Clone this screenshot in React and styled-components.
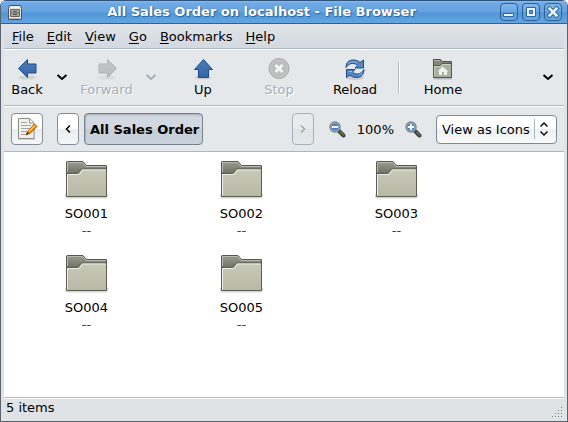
import React from "react";
import styled, { createGlobalStyle } from "styled-components";

const GlobalStyle = createGlobalStyle`
  * { box-sizing: border-box; }
  body { margin: 0; background: #fff; }
  body, button, select { font-family: "DejaVu Sans", sans-serif; font-size: 13px; color: #000; }
  svg { display: block; flex: none; }
`;

const Window = styled.div`
  min-height: 100vh;
  display: flex;
  flex-direction: column;
  border: 1px solid #59636e;
  border-top: 0;
  border-radius: 6px 6px 0 0;
  background: #dfe3e6;
  overflow: hidden;
`;

const TitleBar = styled.header`
  height: 24px;
  display: flex;
  align-items: center;
  gap: 4px;
  padding: 0 5px 0 6px;
  border-top: 1px solid #2f547c;
  border-bottom: 1px solid #33618f;
  background: linear-gradient(#86bbf0 0, #70aae5 2px, #65a2df 11px, #5096d7 12px, #62a5e2 22px);
`;

const Title = styled.h1`
  flex: 1;
  margin: 0;
  font-size: 13px;
  line-height: 20px;
  text-align: center;
  white-space: nowrap;
  color: #fff;
  text-shadow: 1px 1px 1px #2c619c, 0 0 1px #2c619c;
`;

const WindowButton = styled.button`
  width: 18px;
  height: 18px;
  padding: 0;
  display: grid;
  place-items: center;
  border: 1px solid #2d5f94;
  border-radius: 4px;
  background: linear-gradient(#83b8ee, #68a5e1 50%, #5297d8 50%, #67a8e4);
`;

const Frame = styled.div`
  flex: 1;
  display: flex;
  flex-direction: column;
  margin: 0 3px;
`;

const MenuBar = styled.nav`
  height: 26px;
  display: flex;
  align-items: center;
  gap: 1px;
  padding: 0 2px;
  border-bottom: 1px solid #fff;
  box-shadow: inset 0 -1px #adb8c1;
  background: linear-gradient(#e1e5e9, #d2d8df);
`;

const MenuItem = styled.button`
  height: 24px;
  padding: 0 6px;
  border: 0;
  background: none;
  line-height: 24px;
  u { text-underline-offset: 2px; text-decoration-thickness: 1px; }
`;

const ToolBar = styled.div`
  height: 57px;
  display: flex;
  align-items: stretch;
  border-bottom: 1px solid #fff;
  box-shadow: inset 0 -1px #adb8c1;
  background: #e4e8eb;
`;

const ToolButton = styled.button`
  width: ${(p) => p.$width || 76}px;
  padding: 8px 0 0;
  display: flex;
  flex-direction: column;
  align-items: center;
  justify-content: flex-start;
  border: 0;
  background: none;
  line-height: 16px;
  white-space: nowrap;
  &:disabled { color: #a3afba; text-shadow: 1px 1px #fff; }
`;

const ArrowButton = styled.button`
  width: 24px;
  padding: 0 0 2px;
  display: grid;
  place-items: center;
  border: 0;
  background: none;
  color: #000;
  &:disabled { color: #a3afba; }
`;

const OverflowButton = styled(ArrowButton)`
  margin-left: auto;
  margin-right: 4px;
`;

const Spacer = styled.div`
  width: 2px;
`;

const Separator = styled.div`
  width: 2px;
  margin: 11px 5px 13px;
  background: linear-gradient(90deg, #afb9c2 50%, #fff 50%);
`;

const LocationBar = styled.div`
  height: 45px;
  display: flex;
  align-items: center;
  padding: 0 7px;
  border-bottom: 1px solid #adb8c1;
  background: #e4e8eb;
`;

const LocationButton = styled.button`
  width: ${(p) => p.$width}px;
  height: 32px;
  padding: 0;
  display: grid;
  place-items: center;
  border: 1px solid #858e98;
  border-radius: 4px;
  background: linear-gradient(#fff 50%, #e9edef 50%, #f5f7f7);
  &:disabled {
    color: #9ea7ae;
    border-color: #a5b0bb;
    background: linear-gradient(#e8ebed 50%, #dee3e6 50%, #e4e8ea);
  }
`;

const PathBar = styled.div`
  flex: 1;
  display: flex;
  align-items: center;
  gap: 5px;
  margin: 0 15px 0 14px;
`;

const CurrentFolder = styled.button`
  height: 32px;
  padding: 0 3px 0 5px;
  margin-right: auto;
  border: 1px solid #77828f;
  border-radius: 4px;
  background: linear-gradient(#c3cad2 0, #d3d9e0 4px, #d0d7df 50%, #c5cdd6 50%, #cbd3dc);
  box-shadow: inset 1px 1px 1px #a9b3be;
  font-weight: bold;
  white-space: nowrap;
`;

const Zoom = styled.div`
  display: flex;
  align-items: center;
  gap: 11px;
  margin-right: 14px;
`;

const ZoomButton = styled.button`
  padding: 0;
  border: 0;
  background: none;
`;

const ViewPicker = styled.label`
  display: grid;
  align-items: center;
  width: 121px;
  > * { grid-area: 1 / 1; }
  > svg { justify-self: end; pointer-events: none; }
`;

const ViewSelect = styled.select`
  width: 100%;
  height: 29px;
  padding: 0 0 0 5px;
  appearance: none;
  border: 1px solid #7f8996;
  border-radius: 4px;
  background: linear-gradient(#fff 50%, #edf0f2 50%, #f8f9f9);
`;

const Files = styled.main`
  flex: 1;
  display: grid;
  grid-template-columns: repeat(auto-fill, 155px);
  grid-auto-rows: 94px;
  padding: 7px 0 0 5px;
  background: #fff;
`;

const FileItem = styled.div`
  display: flex;
  flex-direction: column;
  align-items: center;
`;

const FileName = styled.span`
  margin-top: 4px;
  line-height: 17px;
`;

const FileInfo = styled.span`
  line-height: 17px;
  color: #39395f;
`;

const StatusBar = styled.footer`
  height: 24px;
  display: flex;
  align-items: center;
  justify-content: space-between;
  padding: 0 1px 3px 2px;
  border-top: 1px solid #adb8c1;
  box-shadow: inset 0 1px #fff;
  background: #dfe3e6;
  line-height: 18px;
  > svg { align-self: flex-end; }
`;

const CabinetIcon = () => (
  <svg width="16" height="17" viewBox="0 0 16 17" aria-hidden="true">
    <path d="M2.500 1.500h11l1 3v11h-13v-11z" fill="#e5e5df" stroke="#4a5256" />
    <path d="M3 3h10" stroke="#fafaf7" />
    <path d="M3.500 5.500h9v7h-9zM3.500 9h9" fill="#aaaba2" stroke="#666860" />
    <path d="M6 7.500h4M6 10.500h4" stroke="#4c504b" />
    <path d="M3 14.500h10" stroke="#b9b9b1" />
  </svg>
);

const glyphs = {
  Minimize: (
    <>
      <path d="M2.500 9.500h10v3h-10z" fill="#e9f3fd" stroke="#30659d" />
    </>
  ),
  Maximize: (
    <>
      <path d="M3.500 3.500h9v9h-9z" fill="#e9f3fd" stroke="#30659d" />
      <path d="M6.500 6.500h3v3h-3z" fill="#62a2df" stroke="#30659d" />
    </>
  ),
  Close: (
    <>
      <path d="M4.500 4.500l7 7M11.500 4.500l-7 7" stroke="#30659d" strokeWidth="4.500" strokeLinecap="square" />
      <path d="M4.500 4.500l7 7M11.500 4.500l-7 7" stroke="#e9f3fd" strokeWidth="2.500" strokeLinecap="square" />
    </>
  ),
};

const Chevron = () => (
  <svg width="12" height="8" viewBox="0 0 12 8" aria-hidden="true">
    <path d="M1.500 2L6 6l4.500-4" fill="none" stroke="currentColor" strokeWidth="2" />
  </svg>
);

const SmallArrow = ({ right }) => (
  <svg width="6" height="10" viewBox="0 0 6 10" aria-hidden="true">
    <path d={right ? "M1 1.500L4.500 5 1 8.500" : "M5 1.500L1.500 5 5 8.500"} fill="none" stroke="currentColor" strokeWidth="1.500" />
  </svg>
);

const ArrowIcon = ({ direction }) => {
  const muted = direction === "right";
  const paths = {
    left: "M2.500 10.500L11.500 1.500V6h8.500v9h-8.500v4.500z",
    right: "M20.500 10.500L11.500 1.500V6H3v9h8.500v4.500z",
    up: "M11.500 1.500L20.500 11.500H16.500v8H6.500v-8H2.500z",
  };
  return (
    <svg width="22" height="24" viewBox="0 0 22 24" aria-hidden="true">
      <defs>
        <linearGradient id={"arrow-" + direction} x2="0" y2="1">
          <stop stopColor={muted ? "#c7cbcc" : "#4d7cb8"} />
          <stop offset="1" stopColor={muted ? "#b5b9bb" : "#3465a4"} />
        </linearGradient>
      </defs>
      <ellipse cx="11" cy="19.500" rx="8.500" ry="2" fill="#777" opacity={muted ? 0.1 : 0.2} />
      <path d={paths[direction]} fill={"url(#arrow-" + direction + ")"} stroke={muted ? "#afb4b6" : "#204a87"} strokeLinejoin="round" />
    </svg>
  );
};

const StopIcon = () => (
  <svg width="22" height="24" viewBox="0 0 22 24" aria-hidden="true">
    <circle cx="11" cy="10.500" r="10" fill="#bebdbd" stroke="#aaa9a9" />
    <circle cx="11" cy="10.500" r="8.500" fill="none" stroke="#cac9c9" />
    <path d="M7.500 7l7 7M14.500 7l-7 7" stroke="#f4f5f5" strokeWidth="3" />
  </svg>
);

const ReloadIcon = () => (
  <svg width="22" height="24" viewBox="0 0 22 24" aria-hidden="true">
    <ellipse cx="11" cy="19.500" rx="9" ry="2.500" fill="#777" opacity=".25" />
    <g fill="#5688c3" stroke="#204a87" strokeLinejoin="round">
      <path d="M2 9.500C2 4.500 5 2 9.500 2c3 0 5 1 6.500 2.500L19.500 2v8H11l2.500-2.500C12 6 10.500 5.500 8.500 5.500 5.500 5.500 4 7 2 9.500z" />
      <path d="M20 11.500c0 5-3 8-7.500 8-3 0-5-1-6.500-2.500L2.500 19.500v-8H11L8.500 14c1.500 1.500 3 2 5 2 3 0 4.500-2 6.500-4.500z" />
    </g>
    <path d="M4 6c2-2.500 6-3 9-1M5 13.500h3M15 17c1.500-.5 2.500-1.500 3-2.500" fill="none" stroke="#a9c7e8" opacity=".8" />
  </svg>
);

const HomeIcon = () => (
  <svg width="22" height="24" viewBox="0 0 22 24" aria-hidden="true">
    <path d="M2 20.500h18" stroke="#555" strokeWidth="2" opacity=".3" />
    <path d="M1.500 19V1.500h7l2 2h9V19z" fill="#85877a" stroke="#4e5049" />
    <path d="M2.500 3.500V2.500h5.500" stroke="#b2b4a6" fill="none" />
    <path d="M1.500 19.500V7.500H8l2-2h9.500v14z" fill="#adaf9e" stroke="#55584e" />
    <path d="M2.500 18V8.500H8.500l2-2h8" fill="none" stroke="#cdd0c1" />
    <path d="M10.500 8.500L5.500 13.500H7V17h3v-3h2v3h3v-3.500h1.500z" fill="#f1f2e9" />
  </svg>
);

const EditIcon = () => (
  <svg width="22" height="24" viewBox="0 0 22 24" aria-hidden="true">
    <path d="M2 22.500h17" stroke="#777" opacity=".25" />
    <path d="M2.500 1.500h11l4.500 4v16H2.500z" fill="#f1f1ef" stroke="#888a85" strokeLinejoin="round" />
    <path d="M13.500 2v4H18" fill="#fff" stroke="#8f918d" />
    <path d="M5 5.500h6M5 8.500h10M5 11.500h9M5 14.500h6M5 17.500h5" stroke="#a4a5a2" />
    <path d="M10 18l2-4 6.500-7 2.500 2.500-6.500 6.500z" fill="#f57900" stroke="#b75a00" strokeLinejoin="round" />
    <path d="M13 14.500l6-6" stroke="#fcd25a" strokeWidth="1.500" />
    <path d="M10 18l1.500-3 1.500 1.500z" fill="#333" />
  </svg>
);

const MagnifierIcon = ({ plus }) => (
  <svg width="17" height="17" viewBox="0 0 17 17" aria-hidden="true">
    <path d="M10 10l4.500 4.500" stroke="#3f423f" strokeWidth="4" strokeLinecap="round" />
    <path d="M11 10.500l4 4" stroke="#929590" strokeWidth="1" />
    <circle cx="6" cy="6" r="5" fill="#497fbd" stroke="#858985" strokeWidth="1.500" />
    <circle cx="6" cy="6" r="4" fill="none" stroke="#a8c4df" strokeWidth="1" opacity=".6" />
    <path d={plus ? "M3 6h6M6 3v6" : "M3 6h6"} stroke="#fff" strokeWidth="2" />
  </svg>
);

const SpinnerIcon = () => (
  <svg width="24" height="24" viewBox="0 0 24 24" aria-hidden="true">
    <path d="M1.500 2v20" stroke="#acb7c0" />
    <path d="M7.500 9.500L11 6l3.500 3.500M7.500 14.500L11 18l3.500-3.500" fill="none" stroke="#111" strokeWidth="1.500" />
  </svg>
);

const FolderIcon = () => (
  <svg width="47" height="42" viewBox="1 0 47 42" aria-hidden="true">
    <defs>
      <linearGradient id="folder-back" x2="0" y2="1">
        <stop stopColor="#9a9c8e" />
        <stop offset=".35" stopColor="#6f7167" />
      </linearGradient>
      <linearGradient id="folder-front" x2="0" y2="1">
        <stop stopColor="#c8cab9" />
        <stop offset="1" stopColor="#b7b9a4" />
      </linearGradient>
    </defs>
    <path d="M3 35h43v3l-2 1.500H5L3 38z" fill="#555" opacity=".25" />
    <path d="M4.500 37V3q0-.5 1-.5h15.500l3.500 4h19.500q.5 0 .5.500V37z" fill="url(#folder-back)" stroke="#555850" />
    <path d="M5.500 13V3.500H20.500l3.500 4h19.500" fill="none" stroke="#babbb0" />
    <path d="M4.500 14.500h11q1 0 1.500-1l2-3q.5-.5 1.500-.5h24v27q0 .5-.5.500H5q-.5 0-.5-.500z" fill="url(#folder-front)" stroke="#5a5d54" />
    <path d="M5.500 36.500v-21H16q1.500 0 2-1l2-3q.5-.5 1-.5h22.500" fill="none" stroke="#eef0e7" />
  </svg>
);

const ResizeGrip = () => (
  <svg width="12" height="12" viewBox="0 0 12 12" aria-hidden="true">
    <path d="M10 1h1v1h-1zM7 4h1v1H7zM10 4h1v1h-1zM4 7h1v1H4zM7 7h1v1H7zM10 7h1v1h-1zM1 10h1v1H1zM4 10h1v1H4zM7 10h1v1H7zM10 10h1v1h-1z" fill="#7f878e" />
  </svg>
);

const menus = ["File", "Edit", "View", "Go", "Bookmarks", "Help"];
const folders = ["SO001", "SO002", "SO003", "SO004", "SO005"];

export default function App() {
  return (
    <>
      <GlobalStyle />
      <Window>
        <TitleBar>
          <CabinetIcon />
          <Title>All Sales Order on localhost - File Browser</Title>
          {Object.entries(glyphs).map(([name, glyph]) => (
            <WindowButton key={name} aria-label={name}>
              <svg width="16" height="16" viewBox="0 0 16 16" aria-hidden="true">{glyph}</svg>
            </WindowButton>
          ))}
        </TitleBar>
        <Frame>
          <MenuBar>
            {menus.map((name) => (
              <MenuItem key={name}><u>{name[0]}</u>{name.slice(1)}</MenuItem>
            ))}
          </MenuBar>
          <ToolBar>
            <ToolButton $width={46}><ArrowIcon direction="left" />Back</ToolButton>
            <ArrowButton aria-label="Back history"><Chevron /></ArrowButton>
            <ToolButton $width={65} disabled><ArrowIcon direction="right" />Forward</ToolButton>
            <ArrowButton aria-label="Forward history" disabled><Chevron /></ArrowButton>
            <Spacer />
            <ToolButton><ArrowIcon direction="up" />Up</ToolButton>
            <ToolButton disabled><StopIcon />Stop</ToolButton>
            <ToolButton><ReloadIcon />Reload</ToolButton>
            <Separator />
            <ToolButton><HomeIcon />Home</ToolButton>
            <OverflowButton aria-label="More tools"><Chevron /></OverflowButton>
          </ToolBar>
          <LocationBar>
            <LocationButton $width={32} aria-label="Edit location"><EditIcon /></LocationButton>
            <PathBar>
              <LocationButton $width={22} aria-label="Scroll path left"><SmallArrow /></LocationButton>
              <CurrentFolder>All Sales Order</CurrentFolder>
              <LocationButton $width={22} disabled aria-label="Scroll path right"><SmallArrow right /></LocationButton>
            </PathBar>
            <Zoom>
              <ZoomButton aria-label="Zoom out"><MagnifierIcon /></ZoomButton>
              <span>100%</span>
              <ZoomButton aria-label="Zoom in"><MagnifierIcon plus /></ZoomButton>
            </Zoom>
            <ViewPicker>
              <ViewSelect aria-label="View" defaultValue="icons">
                <option value="icons">View as Icons</option>
                <option value="list">View as List</option>
              </ViewSelect>
              <SpinnerIcon />
            </ViewPicker>
          </LocationBar>
          <Files>
            {folders.map((name) => (
              <FileItem key={name}>
                <FolderIcon />
                <FileName>{name}</FileName>
                <FileInfo>--</FileInfo>
              </FileItem>
            ))}
          </Files>
          <StatusBar>
            <span>5 items</span>
            <ResizeGrip />
          </StatusBar>
        </Frame>
      </Window>
    </>
  );
}
